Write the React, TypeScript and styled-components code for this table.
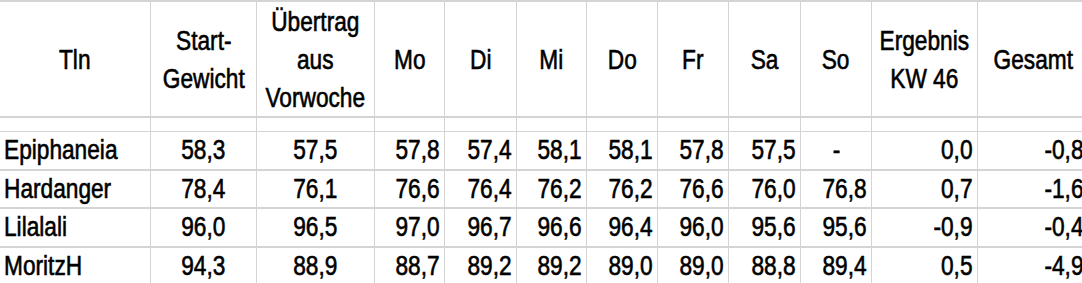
import React from 'react';
import styled, { createGlobalStyle } from 'styled-components';

const GlobalStyle = createGlobalStyle`
  html, body {
    margin: 0;
    padding: 0;
    background: #fff;
    overflow: hidden;
  }
  body {
    font-family: 'Liberation Sans', Arial, sans-serif;
    color: #000;
  }
`;

type Align = 'left' | 'center' | 'right';

const COLS = '151px 106px 118px 70px 72px 70px 71px 71px 72px 71px 106px 110px';

const days = ['Mo', 'Di', 'Mi', 'Do', 'Fr', 'Sa', 'So'];

const rows = [
  { name: 'Epiphaneia', start: '58,3', carry: '57,5', week: ['57,8', '57,4', '58,1', '58,1', '57,8', '57,5', '-'], result: '0,0', total: '-0,8', h: 39 },
  { name: 'Hardanger', start: '78,4', carry: '76,1', week: ['76,6', '76,4', '76,2', '76,2', '76,6', '76,0', '76,8'], result: '0,7', total: '-1,6', h: 38 },
  { name: 'Lilalali', start: '96,0', carry: '96,5', week: ['97,0', '96,7', '96,6', '96,4', '96,0', '95,6', '95,6'], result: '-0,9', total: '-0,4', h: 39 },
  { name: 'MoritzH', start: '94,3', carry: '88,9', week: ['88,7', '89,2', '89,2', '89,0', '89,0', '88,8', '89,4'], result: '0,5', total: '-4,9', h: 39 },
];

const Sheet = styled.div`
  width: 1088px;
  border-top: 2px solid #d4d4d4;
  font-size: 27px;
`;

const Row = styled.div<{ $h: number; $line: number }>`
  display: grid;
  grid-template-columns: ${COLS};
  height: ${(p) => p.$h}px;
  box-sizing: border-box;
  border-bottom: ${(p) => p.$line}px solid #d4d4d4;
`;

const Cell = styled.div<{ $align: Align }>`
  box-sizing: border-box;
  border-right: 1px solid #d4d4d4;
  display: flex;
  align-items: center;
  justify-content: ${(p) =>
    p.$align === 'left' ? 'flex-start' : p.$align === 'right' ? 'flex-end' : 'center'};
  padding: ${(p) => (p.$align === 'left' ? '0 0 0 4px' : p.$align === 'right' ? '0 4px 0 0' : '0')};
  text-align: ${(p) => p.$align};
  overflow: hidden;
  &:last-child {
    border-right: none;
  }
`;

const HeadCell = styled(Cell)`
  line-height: 38px;
  padding-top: 2px;
`;

const Txt = styled.span<{ $align: Align }>`
  display: inline-block;
  white-space: nowrap;
  -webkit-text-stroke: 0.6px #000;
  transform: scaleX(0.84);
  transform-origin: ${(p) => p.$align} center;
`;

const Text: React.FC<{ align: Align; children: React.ReactNode }> = ({ align, children }) => (
  <Txt $align={align}>{children}</Txt>
);

export default function App() {
  return (
    <>
      <GlobalStyle />
      <Sheet>
        <Row $h={116} $line={2}>
          <HeadCell $align="center"><Text align="center">Tln</Text></HeadCell>
          <HeadCell $align="center"><Text align="center">Start-<br />Gewicht</Text></HeadCell>
          <HeadCell $align="center"><Text align="center">Übertrag<br />aus<br />Vorwoche</Text></HeadCell>
          {days.map((d) => (
            <HeadCell key={d} $align="center"><Text align="center">{d}</Text></HeadCell>
          ))}
          <HeadCell $align="center"><Text align="center">Ergebnis<br />KW 46</Text></HeadCell>
          <HeadCell $align="center"><Text align="center">Gesamt</Text></HeadCell>
        </Row>
        <Row $h={14} $line={1}>
          {Array.from({ length: 12 }).map((_, i) => (
            <Cell key={i} $align="center" />
          ))}
        </Row>
        {rows.map((r) => (
          <Row key={r.name} $h={r.h} $line={2}>
            <Cell $align="left"><Text align="left">{r.name}</Text></Cell>
            <Cell $align="center"><Text align="center">{r.start}</Text></Cell>
            <Cell $align="center"><Text align="center">{r.carry}</Text></Cell>
            {r.week.map((v, i) => {
              const a: Align = v === '-' ? 'center' : 'right';
              return (
                <Cell key={i} $align={a}><Text align={a}>{v}</Text></Cell>
              );
            })}
            <Cell $align="right"><Text align="right">{r.result}</Text></Cell>
            <Cell $align="right"><Text align="right">{r.total}</Text></Cell>
          </Row>
        ))}
      </Sheet>
    </>
  );
}
